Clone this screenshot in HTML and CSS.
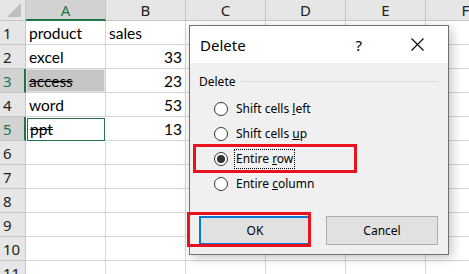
FILE: index.html
```html
<!DOCTYPE html>
<html>
<head>
<meta charset="utf-8">
<link rel="stylesheet" href="styles.css">
</head>
<body>
<div class="sheet">
  <div class="hdr corner"><span class="tri"></span></div>
  <div class="hdr col sel">A</div>
  <div class="hdr col">B</div>
  <div class="hdr col">C</div>
  <div class="hdr col">D</div>
  <div class="hdr col">E</div>
  <div class="hdr col">F</div>

  <div class="hdr row">1</div>
  <div class="cell">product</div><div class="cell">sales</div><div class="cell"></div><div class="cell"></div><div class="cell"></div><div class="cell"></div>

  <div class="hdr row">2</div>
  <div class="cell">excel</div><div class="cell num">33</div><div class="cell"></div><div class="cell"></div><div class="cell"></div><div class="cell"></div>

  <div class="hdr row rsel">3</div>
  <div class="cell shade strike">access</div><div class="cell num">23</div><div class="cell"></div><div class="cell"></div><div class="cell"></div><div class="cell"></div>

  <div class="hdr row">4</div>
  <div class="cell">word</div><div class="cell num">53</div><div class="cell"></div><div class="cell"></div><div class="cell"></div><div class="cell"></div>

  <div class="hdr row rsel">5</div>
  <div class="cell active strike">ppt</div><div class="cell num">13</div><div class="cell"></div><div class="cell"></div><div class="cell"></div><div class="cell"></div>

  <div class="hdr row">6</div>
  <div class="cell"></div><div class="cell"></div><div class="cell"></div><div class="cell"></div><div class="cell"></div><div class="cell"></div>
  <div class="hdr row">7</div>
  <div class="cell"></div><div class="cell"></div><div class="cell"></div><div class="cell"></div><div class="cell"></div><div class="cell"></div>
  <div class="hdr row">8</div>
  <div class="cell"></div><div class="cell"></div><div class="cell"></div><div class="cell"></div><div class="cell"></div><div class="cell"></div>
  <div class="hdr row">9</div>
  <div class="cell"></div><div class="cell"></div><div class="cell"></div><div class="cell"></div><div class="cell"></div><div class="cell"></div>
  <div class="hdr row">10</div>
  <div class="cell"></div><div class="cell"></div><div class="cell"></div><div class="cell"></div><div class="cell"></div><div class="cell"></div>
  <div class="hdr row">11</div>
  <div class="cell"></div><div class="cell"></div><div class="cell"></div><div class="cell"></div><div class="cell"></div><div class="cell"></div>
</div>

<div class="dialog">
  <div class="titlebar">
    <span class="title">Delete</span>
    <span class="help">?</span>
    <svg class="close" width="13" height="13" viewBox="0 0 13 13"><path d="M0.5 0.5 L12.5 12.5 M12.5 0.5 L0.5 12.5" stroke="#000" stroke-width="1.1" fill="none"/></svg>
  </div>
  <div class="body">
    <div class="group"><span>Delete</span><span class="rule"></span></div>
    <div class="opts">
      <div class="opt"><span class="radio"></span><span class="lbl">Shift cells <u>l</u>eft</span></div>
      <div class="opt"><span class="radio"></span><span class="lbl">Shift cells <u>u</u>p</span></div>
      <div class="opt"><span class="radio on"></span><span class="lbl focus">Entire <u>r</u>ow</span></div>
      <div class="opt"><span class="radio"></span><span class="lbl">Entire <u>c</u>olumn</span></div>
    </div>
    <div class="buttons">
      <div class="btn default">OK</div>
      <div class="btn">Cancel</div>
    </div>
  </div>
  <div class="mark mark-row"></div>
  <div class="mark mark-ok"></div>
</div>
</body>
</html>
```
FILE: styles.css
```css
html, body {
  margin: 0;
  padding: 0;
  background: #fff;
  overflow: hidden;
  width: 469px;
  height: 274px;
}

.sheet {
  display: grid;
  grid-template-columns: 26px repeat(6, 80px);
  grid-template-rows: 21px repeat(11, 24px);
  width: 469px;
  height: 274px;
  overflow: hidden;
  font-family: Lato, "Noto Sans", sans-serif;
}

.hdr {
  box-sizing: border-box;
  background: #e6e6e6;
  border-right: 1px solid #c6c6c6;
  border-bottom: 1px solid #c6c6c6;
  color: #222;
  font-family: "Noto Sans", sans-serif;
  font-size: 15px;
}

.corner {
  position: relative;
}
.tri {
  position: absolute;
  right: 4px;
  bottom: 3px;
  width: 0;
  height: 0;
  border-left: 14px solid transparent;
  border-bottom: 14px solid #bfbfbf;
}

.col {
  display: flex;
  align-items: center;
  justify-content: center;
  line-height: 20px;
}
.col.sel {
  background: #d2d2d2;
  color: #217346;
  border-bottom: 2px solid #217346;
}

.row {
  display: flex;
  align-items: center;
  padding-left: 3px;
  font-size: 15px;
}
.row.rsel {
  background: #d2d2d2;
  color: #217346;
  border-right: 2px solid #217346;
}

.cell {
  box-sizing: border-box;
  border-right: 1px solid #d4d4d4;
  border-bottom: 1px solid #d4d4d4;
  font-size: 15.5px;
  color: #000;
  padding: 0 3px;
  display: flex;
  align-items: flex-end;
  padding-bottom: 1px;
  line-height: 20px;
  white-space: nowrap;
  overflow: hidden;
}
.cell.num {
  justify-content: flex-end;
}
.cell.strike {
  text-decoration: line-through;
}
.cell.shade {
  background: #c6c6c6;
  box-shadow: inset 0 0 0 1px #e2e2e2;
}
.cell.active {
  border: 1px solid #217346;
  margin-left: 1px;
  margin-top: 1px;
  margin-right: 1px;
  padding-left: 2px;
}

.dialog {
  position: absolute;
  left: 189px;
  top: 25px;
  width: 260px;
  height: 230px;
  box-sizing: border-box;
  border: 1px solid #707070;
  background: #f0f0f0;
  box-shadow: 3px 3px 10px rgba(0, 0, 0, 0.22);
  font-family: "Noto Sans", sans-serif;
  font-size: 12px;
  color: #000;
  display: flex;
  flex-direction: column;
}

.titlebar {
  height: 37px;
  background: #fff;
  display: flex;
  align-items: center;
  padding-left: 10px;
  padding-right: 24px;
}
.title {
  font-size: 15px;
  flex: 1;
}
.help {
  font-size: 15px;
  margin-right: 49px;
}
.close {
  display: block;
}

.body {
  flex: 1;
  display: flex;
  flex-direction: column;
  padding: 9px 10px 0 9px;
}

.group {
  display: flex;
  align-items: center;
  height: 18px;
  gap: 5px;
}
.rule {
  flex: 1;
  height: 1px;
  background: #dcdcdc;
}

.opts {
  display: flex;
  flex-direction: column;
  margin-top: 6px;
  padding-left: 15px;
}
.opt {
  height: 25px;
  display: flex;
  align-items: center;
  gap: 6px;
}
.radio {
  box-sizing: border-box;
  width: 14px;
  height: 14px;
  border: 1px solid #333;
  border-radius: 50%;
  background: #fff;
  display: flex;
  align-items: center;
  justify-content: center;
}
.radio.on::after {
  content: "";
  width: 8px;
  height: 8px;
  border-radius: 50%;
  background: #333;
}
.lbl {
  padding: 1px 1px;
  border: 1px dotted transparent;
  line-height: 16px;
}
.lbl.focus {
  border-color: #000;
}

.buttons {
  display: flex;
  gap: 15px;
  margin-top: 20px;
}
.btn {
  box-sizing: border-box;
  width: 112px;
  height: 29px;
  background: #e1e1e1;
  border: 1px solid #adadad;
  display: flex;
  align-items: center;
  justify-content: center;
}
.btn.default {
  border: 2px solid #0078d7;
}

.mark {
  position: absolute;
  box-sizing: border-box;
  border: 3px solid #e8131f;
}
.mark-row {
  left: 3px;
  top: 118px;
  width: 164px;
  height: 29px;
}
.mark-ok {
  left: -3px;
  top: 186px;
  width: 124px;
  height: 35px;
}
```
